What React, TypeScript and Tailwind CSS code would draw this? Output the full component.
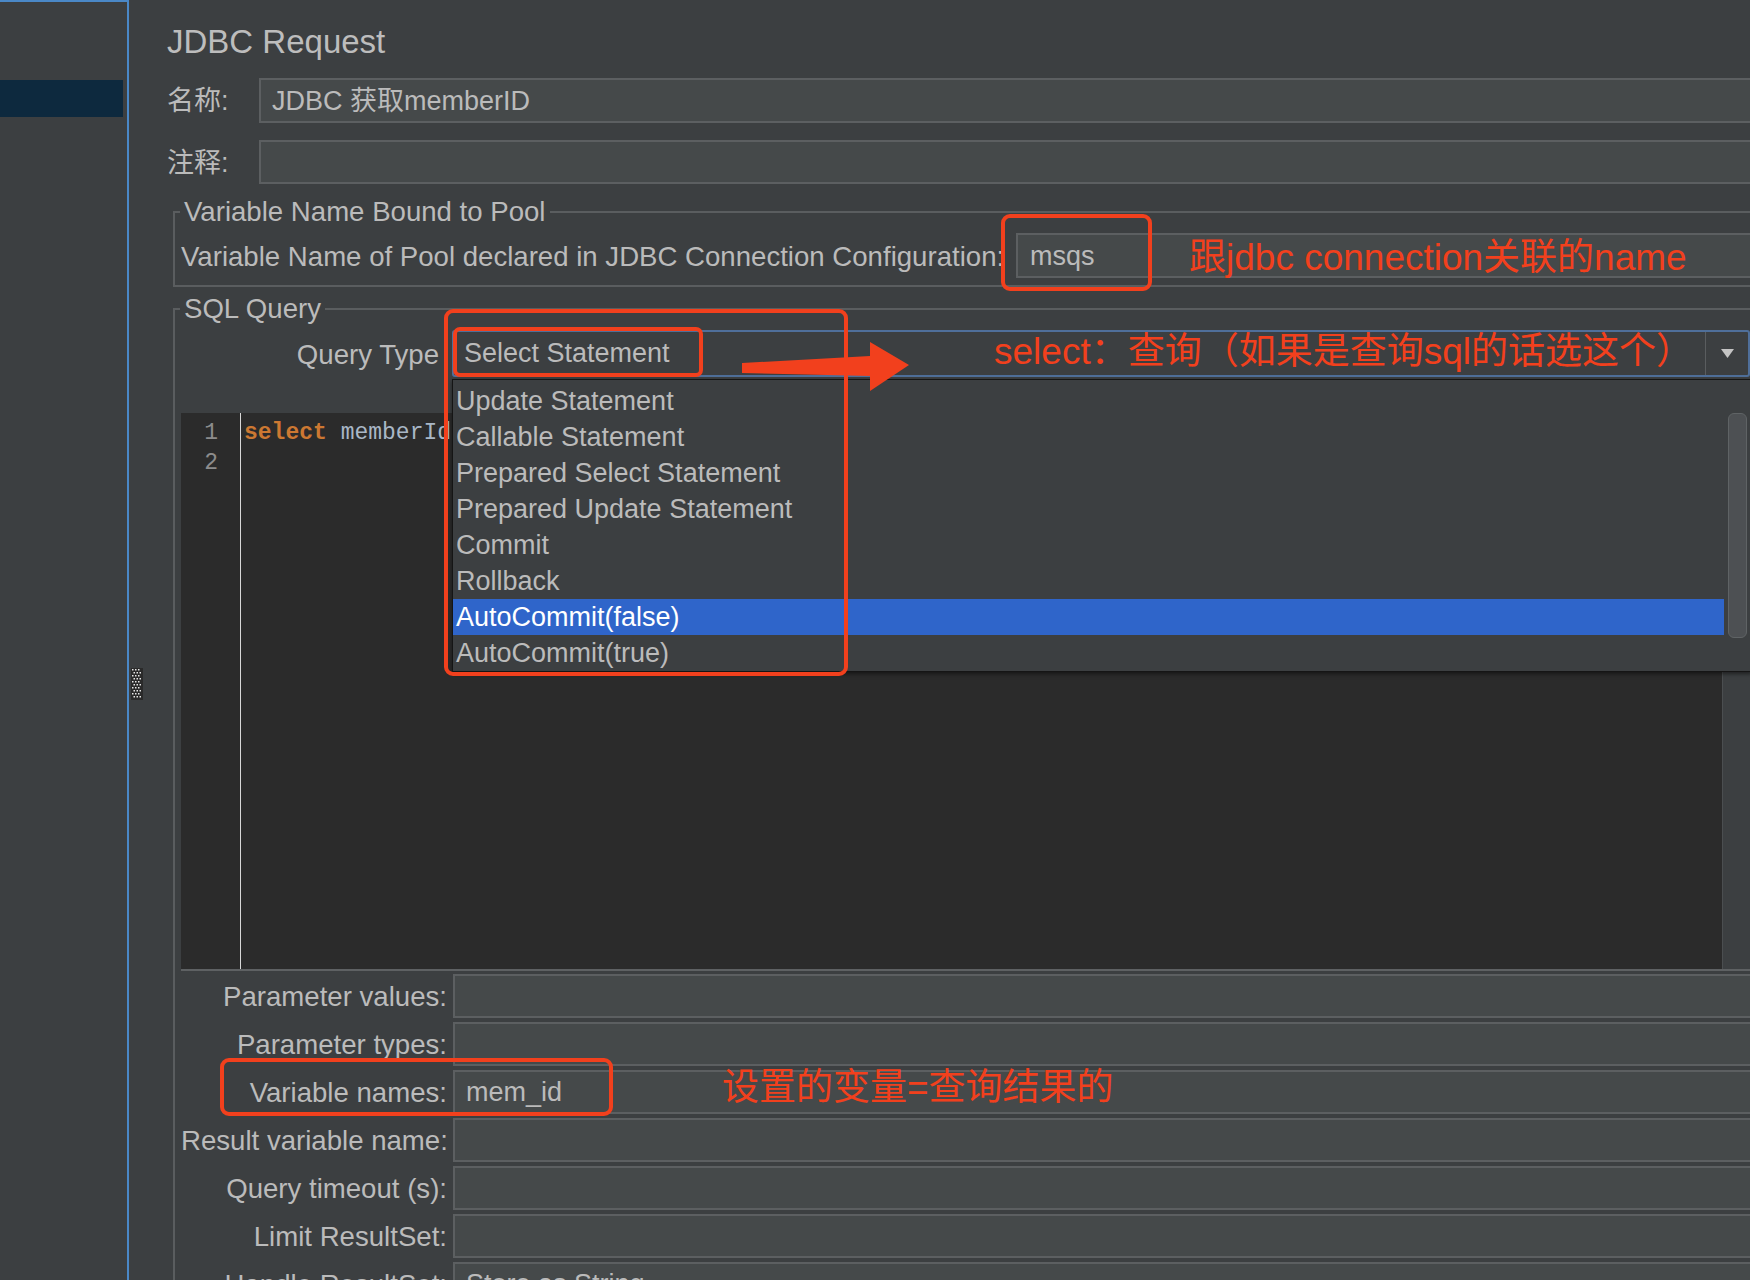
import React from "react";

const items = [
  "Update Statement",
  "Callable Statement",
  "Prepared Select Statement",
  "Prepared Update Statement",
  "Commit",
  "Rollback",
  "AutoCommit(false)",
  "AutoCommit(true)",
];

function Input({ children }: { children?: React.ReactNode }) {
  return (
    <div className="flex h-[44px] min-w-0 flex-1 items-center whitespace-nowrap border-2 border-[#5c5f61] bg-[#45494a] pl-[11px] text-[27px] text-[#bbbbbb]">
      {children}
    </div>
  );
}

function FormRow({ label, value }: { label: string; value?: string }) {
  return (
    <div className="flex h-[44px] items-center">
      <div className="w-[266px] shrink-0 whitespace-nowrap pt-[2px] text-right text-[27.6px]">{label}</div>
      <div className="ml-[6px] flex min-w-0 flex-1">
        <Input>{value}</Input>
      </div>
    </div>
  );
}

function Grip() {
  const dots: React.ReactNode[] = [];
  for (let r = 0; r < 10; r++) {
    for (let c = 0; c < 3; c++) {
      dots.push(
        <rect key={`${r}-${c}`} x={1 + c * 3 + (r % 2) * 1.5} y={1 + r * 3} width="1.5" height="1.5" fill="#e6e6e6" />
      );
    }
  }
  return (
    <svg width="12" height="32" viewBox="0 0 12 32">
      <rect x="0" y="0" width="12" height="32" fill="#2a2a2a" />
      {dots}
    </svg>
  );
}

export default function App() {
  return (
    <div className="relative flex h-[1280px] w-[1750px] overflow-hidden bg-[#3c3f41] font-['Liberation_Sans','Noto_Sans_CJK_SC',sans-serif] text-[#bbbbbb]">
      {/* left tree panel */}
      <aside className="flex w-[129px] shrink-0 flex-col border-r-2 border-t-2 border-[#4a88c7] bg-[#3c3f41] pr-[4px] pt-[78px]">
        <div className="h-[37px] bg-[#0d293e]" />
      </aside>

      {/* splitter */}
      <div className="flex w-[16px] shrink-0 flex-col items-center pt-[668px]">
        <Grip />
      </div>

      {/* main editor panel */}
      <main className="mr-[-30px] flex min-w-0 flex-1 flex-col pl-[22px]">
        <h1 className="mt-[22px] h-[40px] text-[33px] leading-[40px] text-[#bdbdbd]">JDBC Request</h1>

        <div className="mt-[16px] flex h-[45px] items-center">
          <div className="w-[92px] shrink-0 pt-[2px] text-[27px]">名称:</div>
          <div className="flex h-[45px] min-w-0 flex-1 items-center whitespace-nowrap border-2 border-[#5c5f61] bg-[#45494a] pl-[11px] pt-[2px] text-[27px]">
            JDBC 获取memberID
          </div>
        </div>

        <div className="mt-[17px] flex h-[44px] items-center">
          <div className="w-[92px] shrink-0 pt-[2px] text-[27px]">注释:</div>
          <Input />
        </div>

        <fieldset className="ml-[6px] mt-[13px] border-2 border-[#5a5d5f]">
          <legend className="ml-[5px] h-[30px] px-[4px] text-[27.6px] leading-[30px]">Variable Name Bound to Pool</legend>
          <div className="flex items-center pb-[7px] pl-[6px] pt-[6px]">
            <div className="w-[835px] shrink-0 overflow-hidden whitespace-nowrap pt-[3px] text-[27.6px]">
              Variable Name of Pool declared in JDBC Connection Configuration:
            </div>
            <div className="flex h-[45px] min-w-0 flex-1 items-center border-2 border-[#5c5f61] bg-[#45494a] pl-[12px] pt-[2px] text-[27px]">
              msqs
            </div>
          </div>
        </fieldset>

        <fieldset className="mb-[-10px] ml-[6px] mt-[7px] min-h-0 flex-1 border-2 border-[#5a5d5f]">
          <legend className="ml-[5px] h-[30px] px-[4px] text-[27.6px] leading-[30px]">SQL Query</legend>

          <div className="mt-[6px] flex h-[47px] items-center">
            <div className="w-[264px] shrink-0 whitespace-nowrap pt-[3px] text-right text-[27.6px]">Query Type</div>
            <div className="relative ml-[13px] mr-[28px] flex h-[47px] min-w-0 flex-1 items-center rounded-[3px] border-2 border-[#4f6f9a] bg-[#3c3f41]">
              <div className="flex-1 whitespace-nowrap pl-[10px] text-[27px]">Select Statement</div>
              <div className="flex h-full w-[43px] items-center justify-center border-l border-[#5a5d5f]">
                <svg width="13" height="9" viewBox="0 0 13 9">
                  <path d="M0 0 H13 L6.5 9 Z" fill="#c4c4c4" />
                </svg>
              </div>

              {/* open popup list */}
              <div className="absolute left-[-2px] top-[47px] z-10 flex w-[1300px] border border-[#151515] bg-[#3c3f41] shadow-[0_2px_4px_rgba(0,0,0,0.5)]">
                <ul className="flex-1 pt-[3px]">
                  {items.map((it) => (
                    <li
                      key={it}
                      className={
                        it === "AutoCommit(false)"
                          ? "h-[36px] whitespace-nowrap bg-[#2f65ca] pl-[3px] text-[27px] leading-[36px] text-white"
                          : "h-[36px] whitespace-nowrap pl-[3px] text-[27px] leading-[36px] text-[#bbbbbb]"
                      }
                    >
                      {it}
                    </li>
                  ))}
                </ul>
                <div className="w-[27px] shrink-0 pl-[4px] pt-[33px]">
                  <div className="h-[225px] w-[19px] rounded-[6px] border border-[#5f6365] bg-[#4d5053]" />
                </div>
              </div>
            </div>
          </div>

          {/* SQL editor */}
          <div className="ml-[6px] mr-[28px] mt-[36px] flex h-[556px]">
            <div className="flex flex-1 bg-[#2b2b2b] font-['Liberation_Mono',monospace] text-[23px] leading-[30px]">
              <div className="w-[60px] shrink-0 border-r border-[#d8d8d8] pr-[22px] pt-[5px] text-right text-[#8c8c8c]">
                <div>1</div>
                <div>2</div>
              </div>
              <div className="whitespace-nowrap pl-[3px] pt-[5px] text-[#a9b7c6]">
                <span className="font-bold text-[#cc7832]">select</span> memberId
              </div>
            </div>
            <div className="w-[28px] shrink-0 border-l border-[#4b4e50] bg-[#3c3f41]" />
          </div>
          <div className="ml-[6px] h-[2px] bg-[#5e6163]" />

          <div className="mt-[3px] flex flex-col gap-[4px] pl-[6px]">
            <FormRow label="Parameter values:" />
            <FormRow label="Parameter types:" />
            <FormRow label="Variable names:" value="mem_id" />
            <FormRow label="Result variable name:" />
            <FormRow label="Query timeout (s):" />
            <FormRow label="Limit ResultSet:" />
            <FormRow label="Handle ResultSet:" value="Store as String" />
          </div>
        </fieldset>
      </main>

      {/* annotations */}
      <div className="absolute left-[1001px] top-[214px] z-20 h-[77px] w-[151px] rounded-[9px] border-4 border-[#f2401d]" />
      <div className="absolute left-[1189px] top-[236px] z-20 whitespace-nowrap text-[37px] leading-[44px] text-[#f2401d]">
        跟jdbc connection关联的name
      </div>

      <div className="absolute left-[444px] top-[309px] z-20 h-[367px] w-[404px] rounded-[9px] border-4 border-[#f2401d]" />
      <div className="absolute left-[453px] top-[327px] z-20 h-[50px] w-[250px] rounded-[7px] border-4 border-[#f2401d]" />
      <svg className="absolute left-[740px] top-[338px] z-20" width="175" height="58" viewBox="0 0 175 58">
        <polygon points="2,25 130,18 130,4 169,27 130,53 130,38 2,35" fill="#f2401d" />
      </svg>
      <div className="absolute left-[994px] top-[330px] z-20 whitespace-nowrap text-[37px] leading-[44px] text-[#f2401d]">
        select：查询（如果是查询sql的话选这个）
      </div>

      <div className="absolute left-[220px] top-[1058px] z-20 h-[58px] w-[393px] rounded-[9px] border-4 border-[#f2401d]" />
      <div className="absolute left-[722px] top-[1066px] z-20 whitespace-nowrap text-[37px] leading-[44px] text-[#f2401d]">
        设置的变量=查询结果的
      </div>
    </div>
  );
}
